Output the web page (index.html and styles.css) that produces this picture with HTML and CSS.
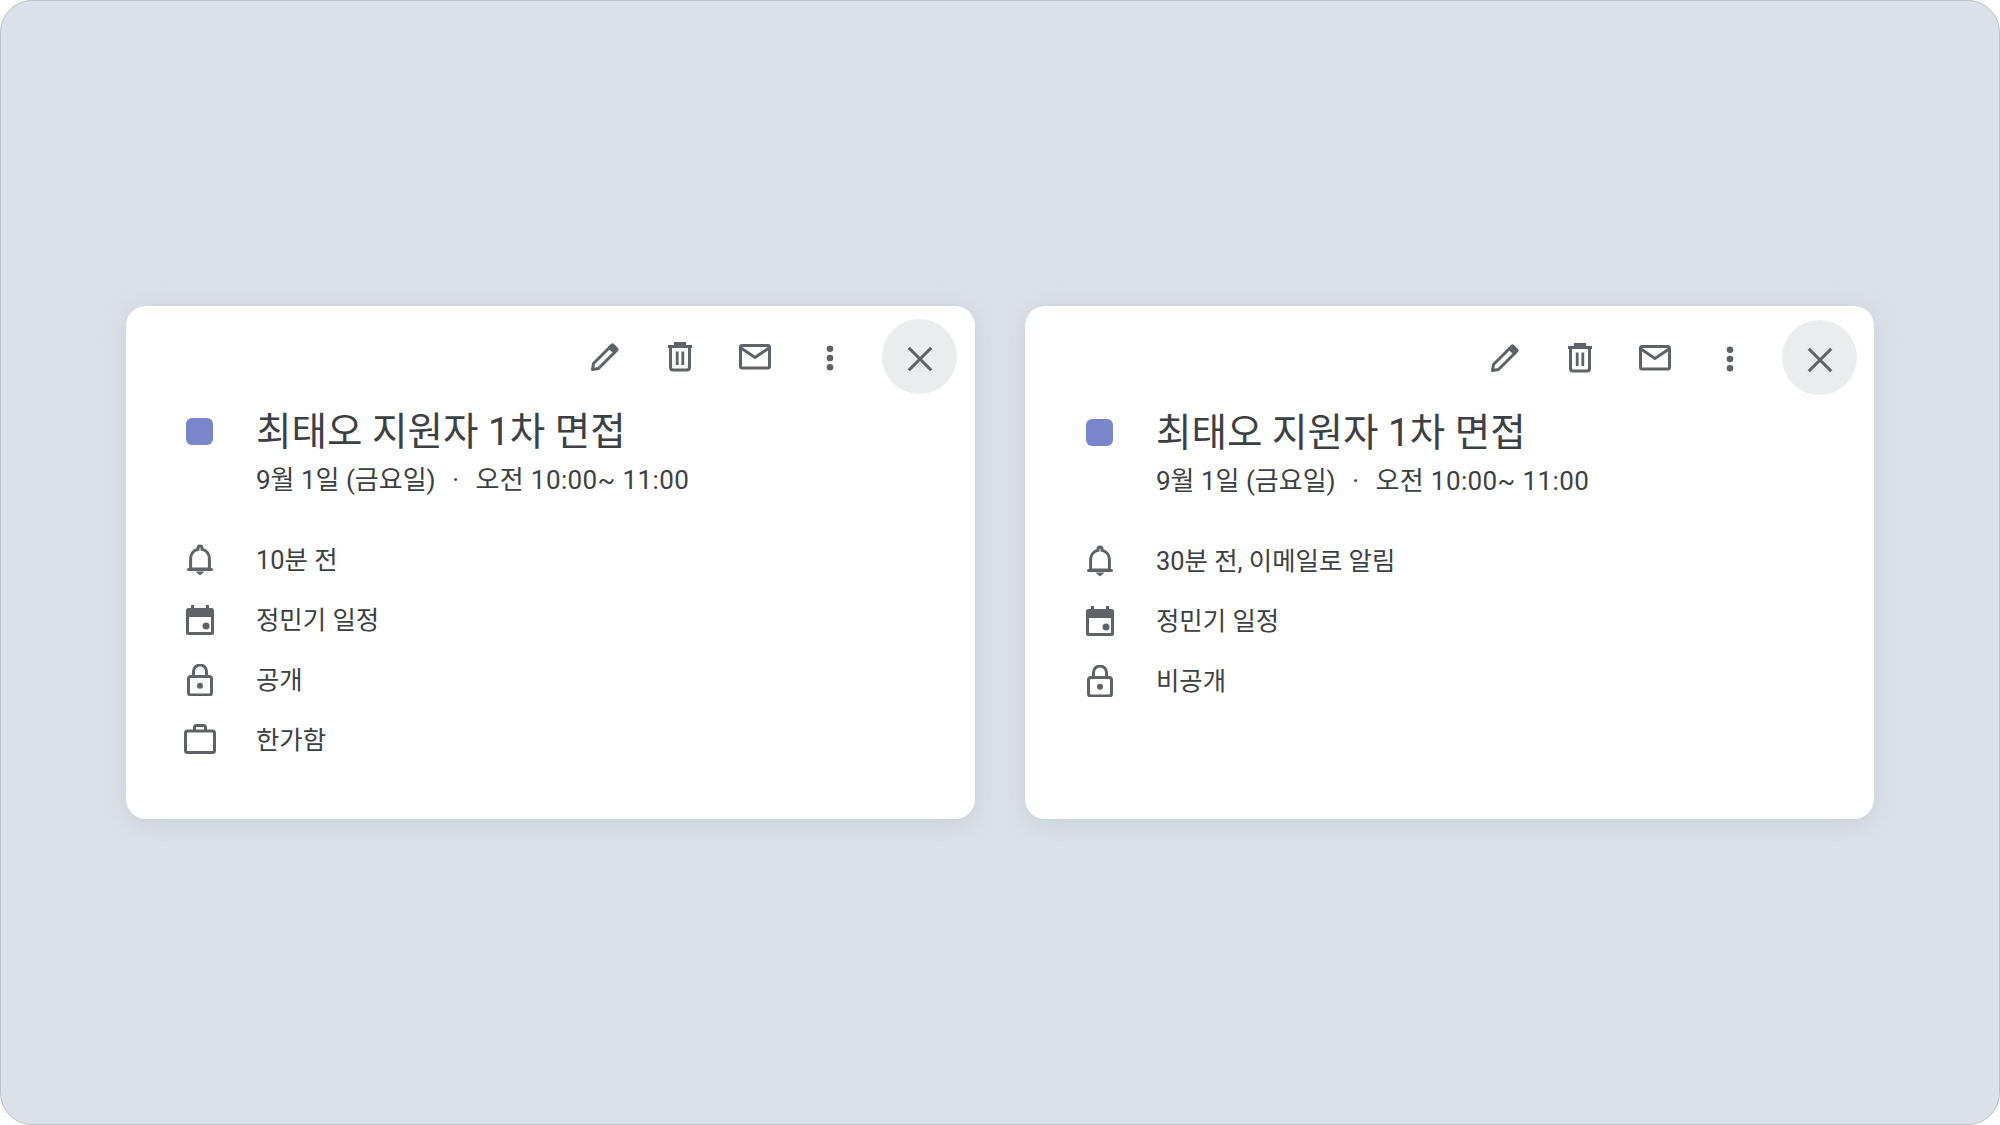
FILE: index.html
```html
<!DOCTYPE html>
<html lang="ko">
<head>
  <meta charset="UTF-8" />
  <title>일정 상세</title>
  <link rel="stylesheet" href="styles.css">
</head>
<body>
  <svg class="sprite" width="0" height="0">
    <symbol id="i-pencil" viewBox="0 0 32 32">
      <path d="M3.500 28.500l1-6L20.500 6.500l5 5L9.500 27.500z" fill="none" stroke="currentColor" stroke-width="3" stroke-linejoin="round"/>
      <path d="M22 3a2.200 2.200 0 0 1 3 0l4 4a2.200 2.200 0 0 1 0 3l-3 3-7-7z" fill="currentColor"/>
    </symbol>
    <symbol id="i-trash" viewBox="0 0 32 32">
      <path d="M4 5.500h24M11.500 5V2.500h9V5" fill="none" stroke="currentColor" stroke-width="3"/>
      <path d="M6.500 5.500v21a2.500 2.500 0 0 0 2.500 2.500h14a2.500 2.500 0 0 0 2.500-2.500v-21" fill="none" stroke="currentColor" stroke-width="3"/>
      <path d="M13.200 10.500v13.500M18.800 10.500v13.500" fill="none" stroke="currentColor" stroke-width="2.800"/>
    </symbol>
    <symbol id="i-mail" viewBox="0 0 32 32">
      <rect x="1.500" y="4.500" width="29" height="22.500" rx="1.800" fill="none" stroke="currentColor" stroke-width="3"/>
      <path d="M2 7l14 9.500L30 7" fill="none" stroke="currentColor" stroke-width="3"/>
    </symbol>
    <symbol id="i-dots" viewBox="0 0 32 32">
      <circle cx="16" cy="7.800" r="3.300" fill="currentColor"/>
      <circle cx="16" cy="17" r="3.300" fill="currentColor"/>
      <circle cx="16" cy="26.200" r="3.300" fill="currentColor"/>
    </symbol>
    <symbol id="i-close" viewBox="0 0 32 32">
      <path d="M6 6l20 20M26 6L6 26" fill="none" stroke="currentColor" stroke-width="2.800"/>
    </symbol>
    <symbol id="i-bell" viewBox="0 0 32 32">
      <path d="M16 2a2 2 0 0 1 2 2v1.300c4.600 1 7.400 5 7.400 9.700v10H6.600V15c0-4.700 2.800-8.700 7.400-9.700V4a2 2 0 0 1 2-2z" fill="none" stroke="currentColor" stroke-width="3"/>
      <path d="M4.500 25.500h23" stroke="currentColor" stroke-width="3" stroke-linecap="round"/>
      <path d="M12.500 28h7L16 31z" fill="currentColor" stroke="currentColor" stroke-linejoin="round"/>
    </symbol>
    <symbol id="i-calendar" viewBox="0 0 32 32">
      <path d="M7 1h3v3h12V1h3v3h2.500A2.500 2.500 0 0 1 30 6.500v22a2.500 2.500 0 0 1-2.500 2.500h-23A2.500 2.500 0 0 1 2 28.500v-22A2.500 2.500 0 0 1 4.500 4H7zM5 13v15h22V13z" fill="currentColor" fill-rule="evenodd"/>
      <circle cx="22" cy="22" r="3.500" fill="currentColor"/>
    </symbol>
    <symbol id="i-lock" viewBox="0 0 32 32">
      <rect x="4.500" y="12.500" width="23" height="18.500" rx="2.400" fill="none" stroke="currentColor" stroke-width="3"/>
      <path d="M9.500 12V7.500a6.500 6.500 0 0 1 13 0V12" fill="none" stroke="currentColor" stroke-width="3"/>
      <circle cx="16" cy="21.800" r="3" fill="currentColor"/>
    </symbol>
    <symbol id="i-case" viewBox="0 0 32 32">
      <rect x="1.500" y="7" width="29" height="21.500" rx="2" fill="none" stroke="currentColor" stroke-width="3"/>
      <path d="M10.500 7V3.500a2 2 0 0 1 2-2h7a2 2 0 0 1 2 2V7" fill="none" stroke="currentColor" stroke-width="3"/>
    </symbol>
  </svg>

  <main class="fondo">
    <!-- 일정 카드 1 -->
    <section class="tarjeta">
      <div class="barra">
        <span class="boton"><svg class="icono"><use href="#i-pencil"/></svg></span>
        <span class="boton"><svg class="icono"><use href="#i-trash"/></svg></span>
        <span class="boton"><svg class="icono"><use href="#i-mail"/></svg></span>
        <span class="boton"><svg class="icono"><use href="#i-dots"/></svg></span>
        <span class="cerrar"><svg class="icono"><use href="#i-close"/></svg></span>
      </div>
      <div class="cabecera">
        <div class="marca"><span class="cuadro"></span></div>
        <h2 class="titulo">최태오 지원자 1차 면접</h2>
      </div>
      <p class="fecha">9월 1일 (금요일) <span class="punto">·</span> <span class="hora">오전 10:00~ 11:00</span></p>
      <ul class="lista">
        <li class="fila"><svg class="icono"><use href="#i-bell"/></svg><span>10분 전</span></li>
        <li class="fila"><svg class="icono"><use href="#i-calendar"/></svg><span>정민기 일정</span></li>
        <li class="fila"><svg class="icono"><use href="#i-lock"/></svg><span>공개</span></li>
        <li class="fila"><svg class="icono"><use href="#i-case"/></svg><span>한가함</span></li>
      </ul>
    </section>

    <!-- 일정 카드 2 -->
    <section class="tarjeta tarjeta-b">
      <div class="barra">
        <span class="boton"><svg class="icono"><use href="#i-pencil"/></svg></span>
        <span class="boton"><svg class="icono"><use href="#i-trash"/></svg></span>
        <span class="boton"><svg class="icono"><use href="#i-mail"/></svg></span>
        <span class="boton"><svg class="icono"><use href="#i-dots"/></svg></span>
        <span class="cerrar"><svg class="icono"><use href="#i-close"/></svg></span>
      </div>
      <div class="cabecera">
        <div class="marca"><span class="cuadro"></span></div>
        <h2 class="titulo">최태오 지원자 1차 면접</h2>
      </div>
      <p class="fecha">9월 1일 (금요일) <span class="punto">·</span> <span class="hora">오전 10:00~ 11:00</span></p>
      <ul class="lista">
        <li class="fila"><svg class="icono"><use href="#i-bell"/></svg><span>30분 전, 이메일로 알림</span></li>
        <li class="fila"><svg class="icono"><use href="#i-calendar"/></svg><span>정민기 일정</span></li>
        <li class="fila"><svg class="icono"><use href="#i-lock"/></svg><span>비공개</span></li>
      </ul>
    </section>
  </main>
</body>
</html>
```

FILE: styles.css
```css
:root {
  --color-fondo: #dce1e9;
  --color-borde: #b9c2cd;
  --color-texto: #3c4043;
  --color-icono: #5f6368;
  --color-marca: #7986cb;
  --color-cerrar: #ebeced;
}

* {
  margin: 0;
  padding: 0;
  box-sizing: border-box;
}

html, body {
  width: 2000px;
  height: 1125px;
  overflow: hidden;
  background: #fff;
}

body {
  font-family: Roboto, "Noto Sans CJK KR", sans-serif;
  color: var(--color-texto);
}

.sprite {
  display: block;
  height: 0;
}

.fondo {
  width: 2000px;
  height: 1125px;
  display: flex;
  align-items: center;
  justify-content: center;
  gap: 50px;
  background: var(--color-fondo);
  border: 1px solid var(--color-borde);
  border-radius: 32px;
}

.tarjeta {
  width: 849px;
  height: 513px;
  padding: 13px 18px 0 56px;
  background: #fff;
  border-radius: 20px;
  box-shadow: 0 4px 24px rgba(120, 130, 135, 0.2);
}

.tarjeta-b {
  padding: 14px 17px 0 57px;
}

.barra {
  height: 75px;
  display: flex;
  align-items: center;
  justify-content: flex-end;
}

.boton,
.cerrar {
  width: 75px;
  height: 75px;
  display: flex;
  align-items: center;
  justify-content: center;
}

.cerrar {
  margin-left: 15px;
  padding-top: 4px;
  background: var(--color-cerrar);
  border-radius: 50%;
}

.icono {
  width: 32px;
  height: 32px;
  flex: none;
  color: var(--color-icono);
}

.cerrar .icono {
  width: 36px;
  height: 36px;
}

.cabecera {
  height: 56px;
  margin-top: 9px;
  display: flex;
  align-items: center;
}

.marca {
  width: 74px;
  display: flex;
}

.cuadro {
  width: 27px;
  height: 27px;
  margin-left: 4px;
  background: var(--color-marca);
  border-radius: 6px;
}

.titulo {
  padding-top: 2px;
  font-size: 38.6px;
  font-weight: 400;
  line-height: 54px;
  white-space: nowrap;
}

.fecha {
  margin-top: 3px;
  margin-left: 74px;
  font-size: 26px;
  line-height: 36px;
  white-space: nowrap;
}

.punto {
  margin: 0 10px;
}

.hora {
  letter-spacing: 0.4px;
}

.lista {
  margin-top: 31px;
  list-style: none;
}

.fila {
  height: 60px;
  padding-left: 2px;
  display: flex;
  align-items: center;
  gap: 40px;
  font-size: 25.4px;
}

.fila .icono {
  margin-top: 2px;
}

.fila span {
  padding-bottom: 2px;
}
```
